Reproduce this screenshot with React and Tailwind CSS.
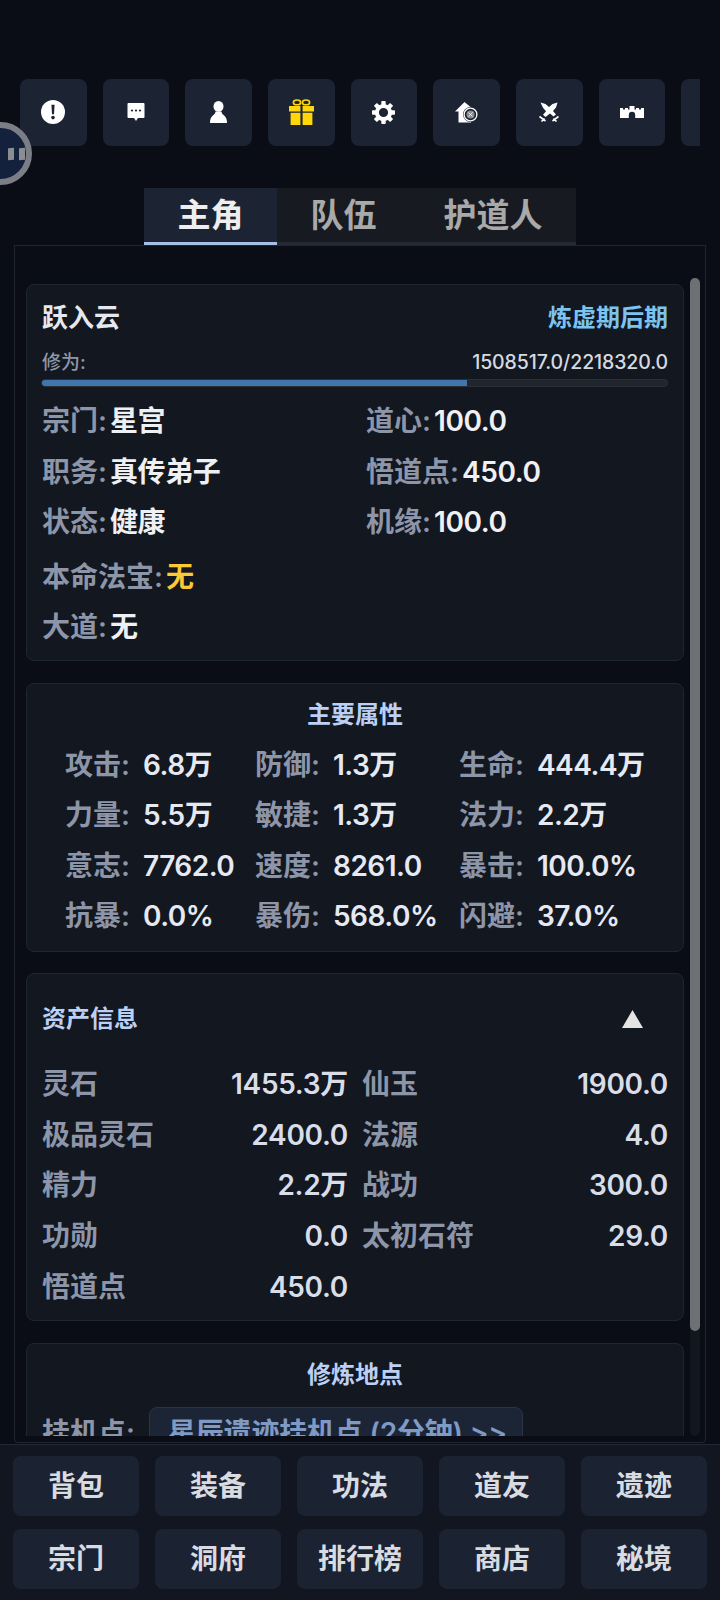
const FONT = { fontFamily: 'Inter, "Noto Sans CJK SC", sans-serif' };

function IconAlert() {
  return (
    <svg width="24" height="24" viewBox="0 0 24 24">
      <circle cx="12" cy="12" r="12" fill="#fff" />
      <path d="M10.400 4.800h3.200l-.6 9.400h-2z" fill="#1c2333" />
      <circle cx="12" cy="17.600" r="1.800" fill="#1c2333" />
    </svg>
  );
}

function IconChat() {
  return (
    <svg width="18" height="18" viewBox="0 0 18 18">
      <path d="M1.500 0h15a1 1 0 0 1 1 1v13a1 1 0 0 1-1 1h-5.500l-2 3-2-3h-5.500a1 1 0 0 1-1-1v-13a1 1 0 0 1 1-1z" fill="#fff" />
      <circle cx="5" cy="7.500" r="1.100" fill="#1c2333" />
      <circle cx="9" cy="7.500" r="1.100" fill="#1c2333" />
      <circle cx="13" cy="7.500" r="1.100" fill="#1c2333" />
    </svg>
  );
}

function IconPerson() {
  return (
    <svg width="17" height="22" viewBox="0 0 17 22">
      <ellipse cx="8.500" cy="5.400" rx="5" ry="5.400" fill="#fff" />
      <path d="M5.600 10.500h5.800c.4 2 1.400 3 3 4.200 1.600 1.300 2.600 3.400 2.600 7.300h-17c0-3.900 1-6 2.600-7.300 1.600-1.200 2.600-2.200 3-4.200z" fill="#fff" />
    </svg>
  );
}

function IconGift() {
  return (
    <svg width="25" height="26" viewBox="0 0 25 26">
      <ellipse cx="8" cy="3.400" rx="3.600" ry="2.400" fill="none" stroke="#ffd60a" strokeWidth="1.600" />
      <ellipse cx="17" cy="3.400" rx="3.600" ry="2.400" fill="none" stroke="#ffd60a" strokeWidth="1.600" />
      <path d="M0 7h11.400v5.400H0zM13.600 7H25v5.400H13.600zM1.600 13.800h9.800V26H1.600zM13.600 13.800h9.800V26h-9.800z" fill="#ffd60a" />
    </svg>
  );
}

function IconGear() {
  return (
    <svg width="23" height="23" viewBox="0 0 23 23">
      <circle cx="11.500" cy="11.500" r="6.600" fill="none" stroke="#fff" strokeWidth="4" />
      {[0, 45, 90, 135, 180, 225, 270, 315].map(a => (
        <rect key={a} x="9.300" y="0" width="4.400" height="4.500" rx="0.800" fill="#fff" transform={`rotate(${a} 11.500 11.500)`} />
      ))}
    </svg>
  );
}

function IconHouse() {
  return (
    <svg width="23" height="21" viewBox="0 0 23 21">
      <path d="M9.500 0l9 7.500h-2.500v13h-12.500v-11h-3.500z" fill="#fff" />
      <circle cx="15.500" cy="12.500" r="7.500" fill="#1c2333" />
      <circle cx="15.500" cy="12.500" r="6.400" fill="none" stroke="#fff" strokeWidth="1.300" />
      <circle cx="15.500" cy="12.500" r="4" fill="#8b8f98" />
      <path d="M13.500 10.500l4 4M17.500 10.500l-4 4" stroke="#fff" strokeWidth="0.800" />
    </svg>
  );
}

function IconSwords() {
  return (
    <svg width="20" height="20" viewBox="0 0 20 20">
      <path d="M1.500 0.500l5 1.500 3.500 3 3.500-3 5-1.500-1.500 5-3 3.500 3 3.500-2.500 2-3.500-3-1 .8-3.500 2.800-2.500-2.300 3-3.500-3-3.500z" fill="#fff" />
      <path d="M0.500 14.500l6 4.500M19.500 14.500l-6 4.500M2.500 19.500l3-3M17.500 19.500l-3-3" stroke="#fff" strokeWidth="1.600" fill="none" />
    </svg>
  );
}

function IconWall() {
  return (
    <svg width="24" height="12" viewBox="0 0 24 12">
      <path d="M0 2h3v1.500h2V2h3v1.500h1.500V0h5v3.500H16V2h3v1.500h2V2h3v10h-8.800V9a3.200 3.200 0 0 0-6.400 0v3H0z" fill="#fff" />
    </svg>
  );
}

function IconBlank() {
  return null;
}

const TOOLS = [IconAlert, IconChat, IconPerson, IconGift, IconGear, IconHouse, IconSwords, IconWall, IconBlank];

function Card({ className, children }) {
  return (
    <div className={`rounded-lg border border-[#1f2632] bg-[#121720] ${className}`}>
      {children}
    </div>
  );
}

function Info({ label, value, valueClass = "text-[#eef0f4]" }) {
  return (
    <div className="flex h-[50.500px] items-center gap-[3px] whitespace-nowrap text-[28px] font-semibold">
      <span className="text-[#8d95a8]">{label}:</span>
      <span className={`tracking-[-0.4px] ${valueClass}`}>{value}</span>
    </div>
  );
}

const ATTRS = [
  ["攻击", "6.8万"], ["防御", "1.3万"], ["生命", "444.4万"],
  ["力量", "5.5万"], ["敏捷", "1.3万"], ["法力", "2.2万"],
  ["意志", "7762.0"], ["速度", "8261.0"], ["暴击", "100.0%"],
  ["抗暴", "0.0%"], ["暴伤", "568.0%"], ["闪避", "37.0%"],
];

const ASSETS = [
  ["灵石", "1455.3万"], ["仙玉", "1900.0"],
  ["极品灵石", "2400.0"], ["法源", "4.0"],
  ["精力", "2.2万"], ["战功", "300.0"],
  ["功勋", "0.0"], ["太初石符", "29.0"],
  ["悟道点", "450.0"],
];

const NAV = ["背包", "装备", "功法", "道友", "遗迹", "宗门", "洞府", "排行榜", "商店", "秘境"];

export default function App() {
  return (
    <div style={FONT} className="relative flex h-[1600px] w-[720px] flex-col overflow-hidden bg-[#0a0d15]">
      {/* floating pause button */}
      <div className="absolute left-[-31px] top-[122px] z-10 flex h-[63px] w-[63px] items-center justify-center rounded-full border-[6px] border-[#7b7e85] bg-[#14213d]">
        <div className="ml-[32px] flex gap-[5px]">
          <span className="h-[12px] w-[6px] -skew-y-6 bg-[#8a8d92]" />
          <span className="h-[12px] w-[6px] -skew-y-6 bg-[#8a8d92]" />
        </div>
      </div>

      <div className="ml-[20px] mt-[79px] flex w-[680px] gap-4 overflow-hidden">
        {TOOLS.map((Icon, i) => (
          <div key={i} className="flex h-[66.670px] w-[66.670px] shrink-0 items-center justify-center rounded-lg bg-[#1c2333]">
            <Icon />
          </div>
        ))}
      </div>

      <div className="mx-auto mt-[42.330px] flex h-[57px] text-[33px] font-semibold leading-[54px]">
        <div className="border-b-[3px] border-[#a6bfe8] bg-[#1c2333] px-[33.500px] text-[#eeeeee]">主角</div>
        <div className="border-b-[3px] border-[#242932] bg-[#171a21] px-[33.500px] text-[#a9a9a9]">队伍</div>
        <div className="border-b-[3px] border-[#242932] bg-[#171a21] px-[33.500px] text-[#a9a9a9]">护道人</div>
      </div>

      <div className="mx-[14px] flex h-[1198px] shrink-0 rounded-b border border-[#1f2632] pb-[6px] pl-[11px] pr-[5px]">
        <div className="h-full w-[658px] overflow-hidden pt-[38px]">
          <Card className="mb-[22px] h-[377px] px-[15px] pt-[16px]">
            <div className="flex h-[34px] items-center justify-between">
              <span className="text-[26px] font-semibold text-[#e5e8ee]">跃入云</span>
              <span className="text-[24px] font-semibold text-[#7cc4f0]">炼虚期后期</span>
            </div>
            <div className="mt-[15px] flex h-[26px] items-center justify-between font-medium">
              <span className="text-[19px] text-[#8d95a8]">修为:</span>
              <span className="text-[19.500px] tracking-[-0.1px] text-[#d5d9e2]">1508517.0/2218320.0</span>
            </div>
            <div className="-ml-[1px] mt-[3px] h-[8px] overflow-hidden rounded-full border border-[#2a2f38] bg-[#20252e]">
              <div className="h-full bg-[#4375ad]" style={{ width: `${(1508517 / 2218320) * 100}%` }} />
            </div>
            <div className="mt-[9px] grid grid-cols-[324px_1fr]">
              <Info label="宗门" value="星宫" />
              <Info label="道心" value="100.0" />
              <Info label="职务" value="真传弟子" />
              <Info label="悟道点" value="450.0" />
              <Info label="状态" value="健康" />
              <Info label="机缘" value="100.0" />
            </div>
            <div className="mt-[4px]">
              <Info label="本命法宝" value="无" valueClass="text-[#fcc934]" />
              <Info label="大道" value="无" />
            </div>
          </Card>

          <Card className="mb-[21px] h-[269px] pl-[38px] pt-[17px]">
            <div className="-ml-[38px] h-[28px] text-center text-[24px] font-semibold leading-[28px] text-[#bcd0f5]">主要属性</div>
            <div className="mt-[11px] grid grid-cols-[190px_204px_1fr]">
              {ATTRS.map(([label, value]) => (
                <div key={label} className="flex h-[50.300px] items-center gap-[13px] whitespace-nowrap text-[28px] font-semibold">
                  <span className="text-[#8d95a8]">{label}:</span>
                  <span className="tracking-[-0.5px] text-[#e6e9f2]">{value}</span>
                </div>
              ))}
            </div>
          </Card>

          <Card className="mb-[22px] h-[348px] px-[15px] pt-[31px]">
            <div className="flex h-[28px] items-center justify-between">
              <span className="text-[24px] font-semibold text-[#bcd0f5]">资产信息</span>
              <svg className="mr-[25px]" width="21" height="18" viewBox="0 0 21 18">
                <path d="M10.500 0L21 18H0z" fill="#e4e4e4" />
              </svg>
            </div>
            <div className="mt-[26px] grid grid-cols-2 gap-x-[14px]">
              {ASSETS.map(([label, value]) => (
                <div key={label} className="flex h-[50.600px] items-center justify-between whitespace-nowrap text-[28px] font-semibold">
                  <span className="text-[#8d95a8]">{label}</span>
                  <span className="tracking-[-0.3px] text-[#d9dde8]">{value}</span>
                </div>
              ))}
            </div>
          </Card>

          <Card className="h-[200px] px-[15px] pt-[17px]">
            <div className="h-[28px] text-center text-[24px] font-semibold leading-[28px] text-[#bcd0f5]">修炼地点</div>
            <div className="mt-[18px] flex items-center whitespace-nowrap text-[28px] font-semibold">
              <span className="w-[107px] text-[#8d95a8]">挂机点:</span>
              <span className="flex h-[52px] w-[374px] items-center rounded-lg border border-[#2b3445] bg-[#1c2536] px-[18px] tracking-[-0.2px] text-[#7f9ac4]">
                星辰遗迹挂机点 (2分钟) &gt;&gt;
              </span>
            </div>
          </Card>
        </div>

        <div className="ml-[6px] mt-[32px] w-[10px] rounded-full bg-[#12161e]">
          <div className="h-[1053px] rounded-full bg-[#6e7074]" />
        </div>
      </div>

      <div className="mt-[1px] flex-1 border-t border-[#212733] bg-[#111620] px-[13px] pt-[11px]">
        <div className="grid grid-cols-5 gap-x-4 gap-y-[13px]">
          {NAV.map(name => (
            <div key={name} className="flex h-[60px] items-center justify-center rounded-lg bg-[#1b2332] text-[28px] font-semibold text-[#d8dbe0]">
              {name}
            </div>
          ))}
        </div>
      </div>
    </div>
  );
}
